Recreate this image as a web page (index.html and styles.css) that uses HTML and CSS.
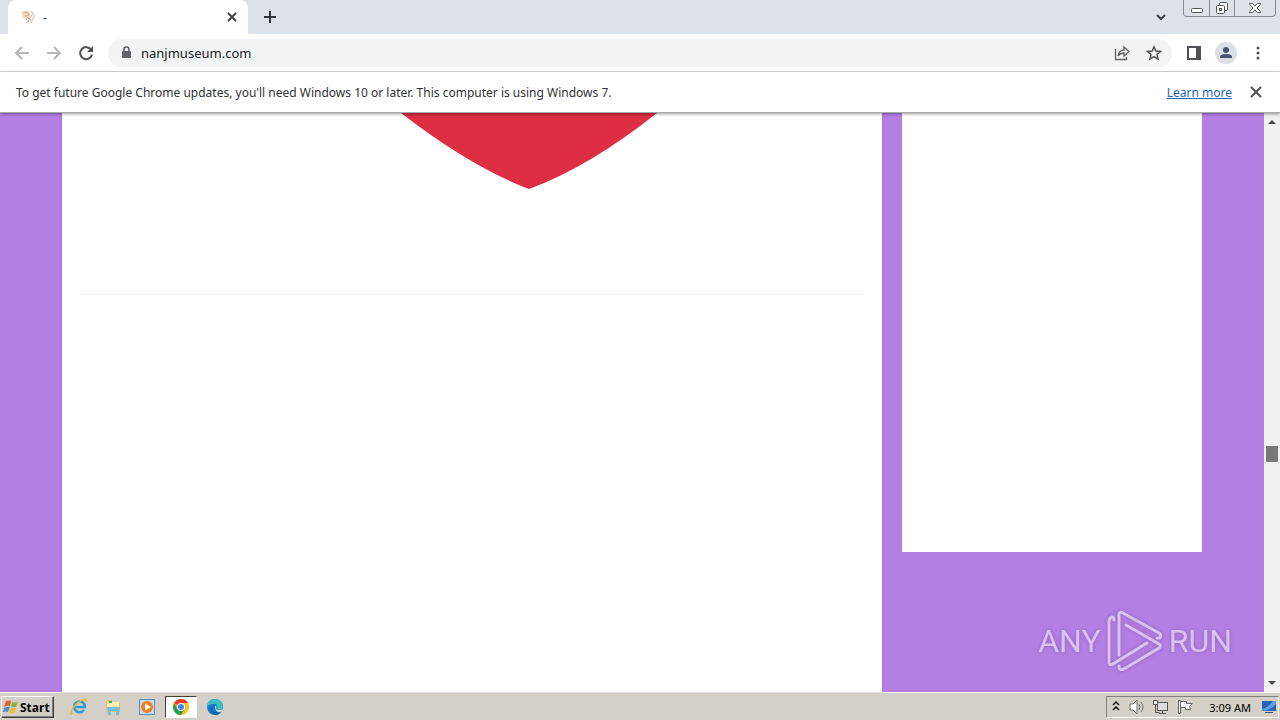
FILE: index.html
```
<!DOCTYPE html>
<html lang="en">
<head>
<meta charset="utf-8">
<meta name="viewport" content="width=device-width, initial-scale=1">
<title>nanjmuseum.com</title>
<link rel="stylesheet" href="styles.css">
</head>
<body>
<div class="desktop">
  <header class="tabstrip">
    <div class="tab">
      <svg class="favicon" width="16" height="16" viewBox="0 0 16 16" fill="none"><path d="M2 3q4-3 8 0l1 4-3 3-5-1-1-3z" fill="#f6dcc0"/><path d="M3 4l4-1 2 3-4 1 4 3 3-4M6 10l3 2-3 2M10 10l2 4" stroke="#d9ab80"/><path d="M11 2q4 3 2 8l-3 3" stroke="#e2dad8" stroke-width="2"/></svg>
      <span class="tab-title">-</span>
      <button class="icon-btn" aria-label="Close tab"><svg width="16" height="16" viewBox="0 0 16 16"><path d="M4 4l8 8M12 4l-8 8" stroke="#3c4043" stroke-width="1.8"/></svg></button>
    </div>
    <button class="icon-btn new-tab" aria-label="New tab"><svg width="16" height="16" viewBox="0 0 16 16"><path d="M8 2v12M2 8h12" stroke="#303438" stroke-width="2"/></svg></button>
    <button class="icon-btn tab-search" aria-label="Search tabs"><svg width="16" height="16" viewBox="0 0 16 16"><path d="M4 6l4 4 4-4" fill="none" stroke="#3c4043" stroke-width="2"/></svg></button>
    <div class="window-controls">
      <button aria-label="Minimize"><svg width="14" height="14" viewBox="0 0 14 14"><rect x="1.500" y="7.500" width="11" height="4" rx="1" fill="#fff" stroke="#50545c"/></svg></button>
      <button aria-label="Restore"><svg width="14" height="14" viewBox="0 0 14 14" fill="#fff" stroke="#50545c"><rect x="4.500" y="1.500" width="8" height="8" rx="1"/><rect x="1.500" y="4.500" width="8" height="8" rx="1"/><rect x="4.500" y="7.500" width="2" height="2"/></svg></button>
      <button class="wide" aria-label="Close"><svg width="14" height="14" viewBox="0 0 14 14"><path d="M1.500 2.500h3L7 5l2.500-2.500h3v1L9 7l3.500 3.500v1h-3L7 9l-2.500 2.500h-3v-1L5 7 1.500 3.500z" fill="#fff" stroke="#50545c"/></svg></button>
    </div>
  </header>

  <nav class="toolbar">
    <button class="icon-btn" aria-label="Back"><svg width="16" height="16" viewBox="0 0 16 16"><path d="M15 8H2M8 2L2 8l6 6" fill="none" stroke="#b4b6b9" stroke-width="2"/></svg></button>
    <button class="icon-btn" aria-label="Forward"><svg width="16" height="16" viewBox="0 0 16 16"><path d="M1 8h13M8 2l6 6-6 6" fill="none" stroke="#b4b6b9" stroke-width="2"/></svg></button>
    <button class="icon-btn" aria-label="Reload"><svg width="16" height="16" viewBox="0 0 16 16"><path d="M13.300 5A6 6 0 1 0 14 9.500" fill="none" stroke="#505356" stroke-width="2"/><path d="M15 1v6H9z" fill="#505356"/></svg></button>
    <div class="omnibox">
      <svg width="12" height="14" viewBox="0 0 12 14"><rect x="2" y="5" width="9" height="7" rx="1" fill="#5f6368"/><path d="M4 6V3.500a2.500 2.500 0 0 1 5 0V6" fill="none" stroke="#5f6368" stroke-width="1.500"/></svg>
      <input class="address" aria-label="Address and search bar" value="nanjmuseum.com">
      <button class="icon-btn" aria-label="Share"><svg width="16" height="16" viewBox="0 0 16 16" fill="none" stroke="#5f6368" stroke-width="1.300"><path d="M1.500 4v10.500h11V12"/><path d="M4 11q1-6 6-6V2l5 4.500-5 4.500V8Q6 8 4 11z"/></svg></button>
      <button class="icon-btn" aria-label="Bookmark"><svg width="16" height="16" viewBox="0 0 16 16"><path d="M8 1.800l1.800 4.300 4.700.4-3.500 3 1.100 4.600L8 11.700l-4.100 2.400L5 9.500l-3.500-3 4.700-.4z" fill="none" stroke="#50545a" stroke-width="1.500"/></svg></button>
    </div>
    <button class="icon-btn" aria-label="Side panel"><svg width="16" height="16" viewBox="0 0 16 16"><path d="M1 1h14v14H1zM3 3v10h7V3z" fill="#505356" fill-rule="evenodd"/></svg></button>
    <button class="icon-btn profile" aria-label="Profile"><svg width="22" height="22" viewBox="0 0 22 22"><circle cx="11" cy="11" r="11" fill="#dce0e6"/><circle cx="11" cy="8" r="3" fill="#48536e"/><path d="M5 16v-1q0-3 6-3t6 3v1z" fill="#48536e"/></svg></button>
    <button class="icon-btn" aria-label="Menu"><svg width="16" height="16" viewBox="0 0 16 16" fill="#505356"><circle cx="8" cy="3" r="1.500"/><circle cx="8" cy="8" r="1.500"/><circle cx="8" cy="13" r="1.500"/></svg></button>
  </nav>

  <div class="infobar">
    <span class="message">To get future Google Chrome updates, you'll need Windows 10 or later. This computer is using Windows 7.</span>
    <a href="#">Learn more</a>
    <button class="icon-btn" aria-label="Dismiss"><svg width="16" height="16" viewBox="0 0 16 16"><path d="M3 3l10 10M13 3L3 13" stroke="#505356" stroke-width="2"/></svg></button>
  </div>

  <div class="viewport">
    <div class="site">
      <main class="article">
        <svg class="heart" width="256" height="76" viewBox="0 0 256 76"><path d="M0 0H256Q188 54 128 76Q70 54 0 0z" fill="#dd2e44"/></svg>
        <hr>
      </main>
      <aside class="sidebar"></aside>
    </div>
    <div class="scrollbar">
      <svg width="16" height="16" viewBox="0 0 16 16"><path d="M4 11l4-4 4 4z" fill="#484848"/></svg>
      <div class="track"><div class="thumb"></div></div>
      <svg width="16" height="16" viewBox="0 0 16 16"><path d="M4 5l4 4 4-4z" fill="#484848"/></svg>
    </div>
    <div class="watermark">
      <span>ANY</span>
      <svg width="56" height="62" viewBox="0 0 56 62"><path d="M7 10Q7 7 5 7Q2 8 2 12V52Q2 56 6 54L40 33M12 45V5Q12 1 16 3L52 23Q55 25 53 28L50 28M19 15L52 34Q55 36 52 38L17 59Q12 61 12 56"/></svg>
      <span>RUN</span>
    </div>
  </div>

  <footer class="taskbar">
    <button class="start"><svg width="16" height="16" viewBox="0 0 16 16"><path d="M3 2q3-1 5 0L7 7Q4 6 1 8z" fill="#e7632c"/><path d="M9 3q3 1 6 0l-2 5q-3 1-5-1z" fill="#82b53f"/><path d="M1 9q3-2 6-1l-2 5q-2-1-5 0z" fill="#4c91d3"/><path d="M8 8q2 2 5 1l-2 5q-3 1-5-1z" fill="#f5bd2f"/></svg>Start</button>
    <button class="task" aria-label="Internet Explorer"><svg width="18" height="18" viewBox="0 0 18 18" fill="none"><path d="M14 12a5.500 5.500 0 1 1 1-3H5" stroke="#319bd5" stroke-width="2.500"/><path d="M3 15Q-1 18 2 12 5 6 12 2q5-2 4 2" stroke="#e9b839" stroke-width="1.500"/></svg></button>
    <button class="task" aria-label="Explorer"><svg width="18" height="18" viewBox="0 0 18 18"><path d="M2 2h5l1 2h8v10H2z" fill="#e6c66a"/><path d="M3 4h12v7H3z" fill="#fbefad"/><path d="M3 9h13l-1 8h-3v-4H7v4H4z" fill="#75bddd"/><path d="M5 4h3" stroke="#4ba660" stroke-width="2"/></svg></button>
    <button class="task" aria-label="Media Player"><svg width="18" height="18" viewBox="0 0 18 18"><rect x="1.500" y="1.500" width="15" height="15" fill="#c4def1" stroke="#5790be"/><circle cx="9" cy="9" r="6" fill="#ef7e1b"/><path d="M7 5.500v7L13 9z" fill="#fff"/></svg></button>
    <button class="task active" aria-label="Chrome"><svg width="18" height="18" viewBox="0 0 18 18"><circle cx="9" cy="9" r="8" fill="#fbc116"/><path d="M9 9L2.100 5A8 8 0 0 1 16 5H9z" fill="#e33b2e"/><path d="M2.100 5A8 8 0 0 0 9 17l3.500-6H5.500z" fill="#299b4d"/><circle cx="9" cy="9" r="4" fill="#fff"/><circle cx="9" cy="9" r="3" fill="#4285f4"/></svg></button>
    <button class="task" aria-label="Edge"><svg width="18" height="18" viewBox="0 0 18 18"><circle cx="9" cy="9" r="8" fill="#1479c9"/><path d="M1 9a8 8 0 0 1 16 0q-1 4-6 2 1-6-4-5-4 0-6 3z" fill="#3cbfbd"/><path d="M7 8q-3 8 8 6-4 5-8 2-5-4 0-8z" fill="#155daf"/><path d="M9 8q2 0 1 3 3 2 7 0l-2 3q-6 1-6-6z" fill="#d8dddb"/></svg></button>
    <div class="tray">
      <svg width="12" height="16" viewBox="0 0 12 16" fill="none" stroke="#000" stroke-width="1.500"><path d="M3 6l3-3 3 3M3 11l3-3 3 3"/></svg>
      <svg width="18" height="16" viewBox="0 0 18 16" fill="none" stroke="#6b6b6b"><path d="M2 5h3l4-4v14l-4-4H2z" fill="#fff"/><path d="M11 5q2 3 0 6M13 3q4 5 0 10"/></svg>
      <svg width="18" height="16" viewBox="0 0 18 16" fill="#ddd" stroke="#555"><rect x="5.500" y="3.500" width="10" height="8"/><path d="M7 14.500h7M10.500 12v2"/><path d="M3.500 5.500v8h4" fill="none"/><path d="M1.500 1.500h4v4h-4z" fill="#fff"/></svg>
      <svg width="18" height="16" viewBox="0 0 18 16" fill="#fff" stroke="#666"><path d="M2.500 1.500h2v13h-2zM4.500 2.500h6v2h6l-3 3 1 3h-5v-2h-5z"/></svg>
      <time>3:09 AM</time>
      <button class="show-desktop" aria-label="Show desktop"><svg width="16" height="14" viewBox="0 0 16 14"><rect x="1" y="1" width="14" height="10" fill="#2764b5"/><path d="M1 9Q7 8 12 1h3v3Q9 11 1 11z" fill="#5da0df"/><path d="M4 12h8v1H4z" fill="#33588e"/></svg></button>
    </div>
  </footer>
</div>
</body>
</html>
```
FILE: styles.css
```
* { box-sizing: border-box; }
body { margin: 0; font-family: "Noto Sans", sans-serif; font-size: 12px; color: #303235; }
button { padding: 0; border: 0; background: none; font: inherit; color: inherit; }
svg { display: block; flex: none; }
.desktop { display: flex; flex-direction: column; height: 100vh; overflow: hidden; }
.icon-btn { display: grid; place-items: center; flex: none; width: 16px; height: 16px; }

.tabstrip { display: flex; flex: none; height: 34px; padding-left: 8px; background: #dde1e8; }
.tab { display: flex; align-items: center; gap: 7px; width: 240px; padding: 0 8px 0 12px; background: #fff; border-radius: 8px 8px 0 0; }
.tab-title { flex: 1; }
.new-tab { margin: 9px 0 0 14px; }
.tab-search { margin: 9px 14px 0 auto; }
.window-controls { display: flex; height: 17px; margin-right: 4px; border: 1px solid #858990; border-top: 0; border-radius: 0 0 4px 4px; }
.window-controls button { display: grid; place-items: center; width: 25px; }
.window-controls button + button { border-left: 1px solid #858990; }
.window-controls .wide { width: 41px; }

.toolbar { display: flex; align-items: center; gap: 16px; flex: none; height: 38px; padding: 0 14px; background: #fff; border-bottom: 1px solid #d8dadd; }
.omnibox { display: flex; align-items: center; gap: 16px; flex: 1; height: 28px; margin-left: -2px; margin-right: -2px; padding: 0 10px 0 12px; border-radius: 14px; background: #f1f3f4; }
.address { flex: 1; min-width: 0; margin-left: -7px; padding: 0; border: 0; outline: 0; background: none; color: #202124; font-family: "Noto Sans", sans-serif; font-size: 13px; }
.profile { width: 22px; height: 22px; }
.toolbar > .profile { margin: 0 -3px; }

.infobar { display: flex; align-items: center; flex: none; z-index: 1; height: 41px; padding: 0 16px; background: #fff; border-bottom: 1px solid #aaa; box-shadow: 0 1px 3px rgba(0, 0, 0, .4); }
.message { flex: 1; white-space: nowrap; }
.infobar a { margin-right: 16px; color: #2563b8; }

.viewport { position: relative; display: flex; flex: 1; min-height: 0; background: #b37fe3; }
.site { display: flex; justify-content: center; gap: 20px; flex: 1; }
.article { width: 820px; padding: 0 18px; background: #fff; box-shadow: 0 0 3px rgba(80, 30, 120, .2); }
.heart { margin: 0 auto 105px 321px; }
hr { margin: 0; border: 0; border-top: 1px solid #f5f5f6; }
.sidebar { align-self: flex-start; width: 300px; min-height: 439px; background: #fff; }
.scrollbar { display: flex; flex-direction: column; width: 16px; background: #f1f1f1; }
.track { flex: 1; padding: 317px 2px 0; }
.thumb { height: 16px; background: #787878; }
.watermark { position: absolute; right: 48px; bottom: 20px; display: flex; align-items: center; gap: 6px; color: #dcc0f1; font-family: Roboto, sans-serif; font-size: 32px; font-weight: 400; line-height: 40px; filter: drop-shadow(0 0 2px #8e64b8); }
.watermark svg { fill: none; stroke: #dcc0f1; stroke-width: 3; stroke-linecap: round; stroke-linejoin: round; }

.taskbar { display: flex; align-items: center; flex: none; gap: 2px; height: 28px; padding: 1px 1px 0; background: #d4d0c8; border-top: 1px solid #f4f2ed; color: #000; }
.start { display: flex; align-items: center; gap: 1px; width: 53px; height: 22px; margin-right: 7px; padding-left: 1px; border: 1px solid; border-color: #fff #404040 #404040 #fff; box-shadow: inset -1px -1px #808080; font-family: "Open Sans", sans-serif; font-size: 12px; font-weight: 700; }
.task { display: grid; place-items: center; width: 32px; height: 22px; }
.active { border: 1px solid; border-color: #404040 #fff #fff #404040; background: #fff; }
.tray { display: flex; align-items: center; gap: 6px; height: 22px; margin-left: auto; padding: 0 1px 0 3px; border: 1px solid; border-color: #808080 #fff #fff #808080; }
time { margin: 0 4px 0 9px; font-family: "Noto Sans", sans-serif; font-size: 11px; white-space: nowrap; }
```
